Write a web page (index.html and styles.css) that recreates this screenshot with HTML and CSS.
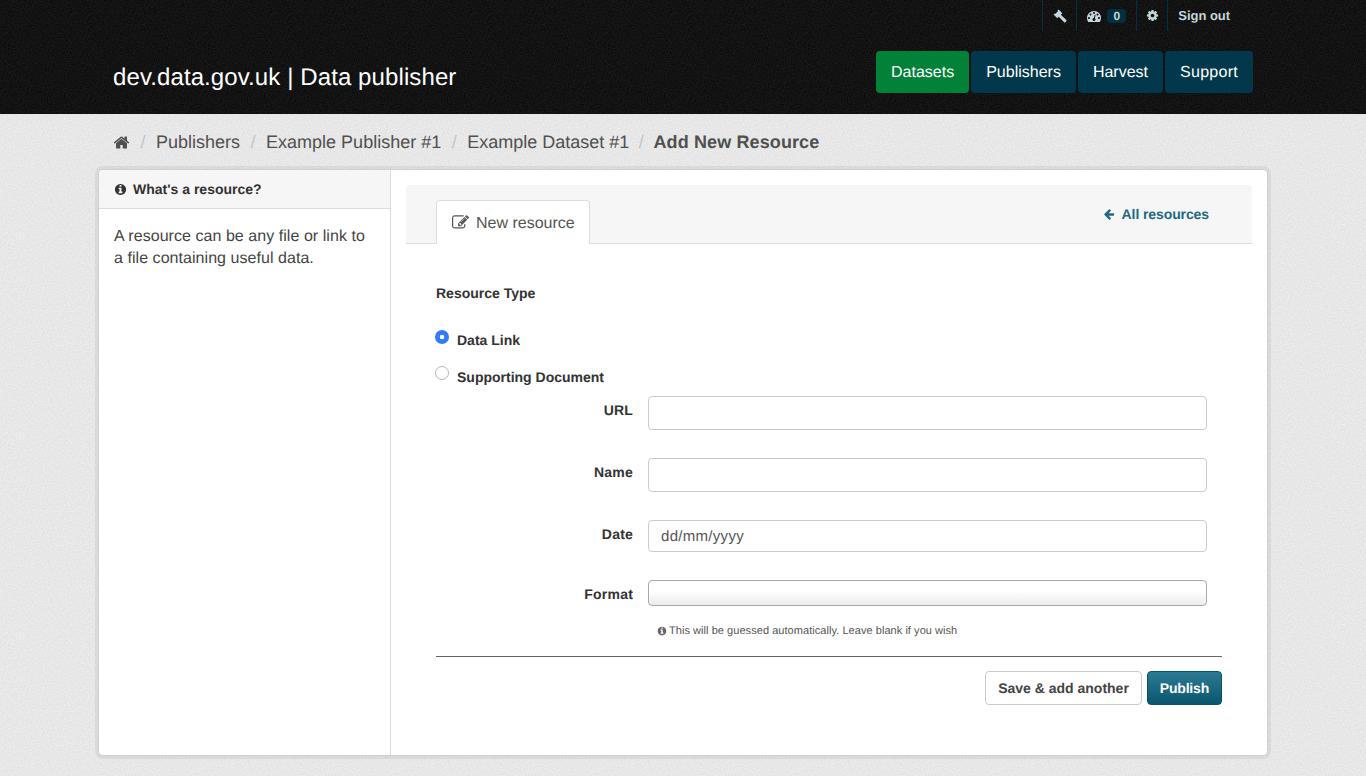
FILE: index.html
```html
<!DOCTYPE html>
<html lang="en">
<head>
<meta charset="utf-8">
<title>Add New Resource - dev.data.gov.uk</title>
<link rel="stylesheet" href="styles.css">
</head>
<body>
<header class="masthead">
  <div class="account-row">
    <ul class="account">
      <li class="account-item"><a href="#" class="account-link"><svg class="icon-gavel" viewBox="0 0 14 14"><path d="M5.600.6 9.300 4.300 7.900 5.700 13.300 11q.6.700 0 1.300l-.9.900q-.6.600-1.300 0L5.800 7.800 4.300 9.300.6 5.600l1-1 .6.500 2.800-2.800-.4-.7z"/></svg></a></li>
      <li class="account-item"><a href="#" class="account-link"><svg class="icon-dash" viewBox="0 0 1792 1792"><path d="M384 1152q0-53-37.500-90.500t-90.500-37.500-90.500 37.500-37.500 90.500 37.500 90.500 90.500 37.500 90.500-37.500 37.500-90.500zm192-448q0-53-37.500-90.500t-90.500-37.500-90.500 37.500-37.500 90.500 37.500 90.500 90.500 37.500 90.500-37.500 37.500-90.500zm428 481l101-382q6-26-7.500-48.500t-38.500-29.500-48 6.500-30 39.500l-101 382q-60 5-107 43.500t-63 98.500q-20 77 20 146t117 89 146-20 89-117q16-60-6-117t-72-91zm660-33q0-53-37.500-90.500t-90.500-37.500-90.500 37.500-37.500 90.500 37.500 90.500 90.500 37.500 90.500-37.500 37.500-90.500zm-640-640q0-53-37.500-90.500t-90.500-37.500-90.500 37.500-37.500 90.500 37.500 90.500 90.500 37.500 90.500-37.500 37.500-90.500zm448 192q0-53-37.500-90.500t-90.500-37.500-90.500 37.500-37.500 90.500 37.500 90.500 90.500 37.500 90.500-37.500 37.500-90.500zm320 448q0 261-141 483-19 29-54 29h-1402q-35 0-54-29-141-221-141-483 0-182 71-348t191-286 286-191 348-71 348 71 286 191 191 286 71 348z"/></svg><span class="badge">0</span></a></li>
      <li class="account-item"><a href="#" class="account-link"><svg class="icon-cog" viewBox="0 0 1792 1792"><path d="M1152 896q0-106-75-181t-181-75-181 75-75 181 75 181 181 75 181-75 75-181zm512-109v222q0 12-8 23t-20 13l-185 28q-19 54-39 91 35 50 107 138 10 12 10 25t-9 23q-27 37-99 108t-94 71q-12 0-26-9l-138-108q-44 23-91 38-16 136-29 186-7 28-36 28h-222q-14 0-24.500-8.500t-11.500-21.500l-28-184q-49-16-90-37l-141 107q-10 9-25 9-14 0-25-11-126-114-165-168-7-10-7-23 0-12 8-23 15-21 51-66.500t54-70.500q-27-50-41-99l-183-27q-13-2-21-12.500t-8-23.500v-222q0-12 8-23t19-13l186-28q14-46 39-92-40-57-107-138-10-12-10-24 0-10 9-23 26-36 98.500-107.500t94.500-71.500q13 0 26 10l138 107q44-23 91-38 16-136 29-186 7-28 36-28h222q14 0 24.500 8.500t11.500 21.500l28 184q49 16 90 37l142-107q9-9 24-9 13 0 25 10 129 119 165 170 7 8 7 22 0 12-8 23-15 21-51 66.500t-54 70.500q26 50 41 98l183 28q13 2 21 12.500t8 23.500z"/></svg></a></li>
      <li class="account-item account-item-last"><a href="#" class="account-link">Sign out</a></li>
    </ul>
  </div>
  <div class="brand-row">
    <a href="#" class="brand">dev.data.gov.uk | Data publisher</a>
    <nav class="nav">
      <a href="#" class="nav-link nav-link-active">Datasets</a>
      <a href="#" class="nav-link">Publishers</a>
      <a href="#" class="nav-link">Harvest</a>
      <a href="#" class="nav-link">Support</a>
    </nav>
  </div>
</header>

<div class="page">
  <ol class="crumbs">
    <li class="crumb"><a href="#" class="crumb-home"><svg class="icon-home" viewBox="0 0 1792 1792"><path d="M1472 992v480q0 26-19 45t-45 19h-384v-384h-256v384h-384q-26 0-45-19t-19-45v-480q0-1 .5-3t.5-3l575-474 575 474q1 2 1 6zm223-69l-62 74q-8 9-21 11h-3q-13 0-21-7l-692-577-692 577q-12 8-24 7-13-2-21-11l-62-74q-8-10-7-23.500t11-21.500l719-599q32-26 76-26t76 26l244 204v-195q0-14 9-23t23-9h192q14 0 23 9t9 23v408l219 182q10 8 11 21.500t-7 23.500z"/></svg></a></li>
    <li class="crumb"><span class="crumb-sep">/</span><a href="#">Publishers</a></li>
    <li class="crumb"><span class="crumb-sep">/</span><a href="#">Example Publisher #1</a></li>
    <li class="crumb"><span class="crumb-sep">/</span><a href="#">Example Dataset #1</a></li>
    <li class="crumb crumb-current"><span class="crumb-sep">/</span>Add New Resource</li>
  </ol>

  <div class="wrapper">
    <aside class="sidebar">
      <h2 class="side-heading"><svg class="icon-info" viewBox="0 0 1792 1792"><path d="M1152 1376v-160q0-14-9-23t-23-9h-96v-512q0-14-9-23t-23-9h-320q-14 0-23 9t-9 23v160q0 14 9 23t23 9h96v320h-96q-14 0-23 9t-9 23v160q0 14 9 23t23 9h448q14 0 23-9t9-23zm-128-896v-160q0-14-9-23t-23-9h-192q-14 0-23 9t-9 23v160q0 14 9 23t23 9h192q14 0 23-9t9-23zm640 416q0 209-103 385.500t-279.500 279.500-385.500 103-385.500-103-279.500-279.500-103-385.500 103-385.500 279.500-279.500 385.500-103 385.500 103 279.500 279.500 103 385.500z"/></svg>What's a resource?</h2>
      <p class="side-text">A resource can be any file or link to a file containing useful data.</p>
    </aside>

    <main class="main">
      <div class="tabbar">
        <a href="#" class="tab"><svg class="icon-edit" viewBox="0 0 1792 1792"><path d="M888 1184l116-116-152-152-116 116v56h96v96h56zm440-720q-16-16-33 1l-350 350q-17 17-1 33t33-1l350-350q17-17 1-33zm80 594v190q0 119-84.500 203.500t-203.500 84.500h-832q-119 0-203.500-84.500t-84.500-203.500v-832q0-119 84.500-203.500t203.500-84.500h832q63 0 117 25 15 7 18 23 3 17-9 29l-49 49q-14 14-32 8-23-6-45-6h-832q-66 0-113 47t-47 113v832q0 66 47 113t113 47h832q66 0 113-47t47-113v-126q0-13 9-22l64-64q15-15 35-7t20 29zm-96-738l288 288-672 672h-288v-288zm444 132l-92 92-288-288 92-92q28-28 68-28t68 28l152 152q28 28 28 68t-28 68z"/></svg>New resource</a>
        <a href="#" class="back-link"><svg class="icon-arrow" viewBox="0 0 1792 1792"><path d="M1664 896v128q0 53-32.500 90.500t-84.500 37.500h-704l293 294q38 36 38 90t-38 90l-75 76q-37 37-90 37-52 0-91-37l-651-652q-37-37-37-90 0-52 37-91l651-650q38-38 91-38 52 0 90 38l75 74q38 38 38 91t-38 91l-293 293h704q52 0 84.500 37.500t32.500 90.500z"/></svg>All resources</a>
      </div>

      <form class="form">
        <div class="type-heading">Resource Type</div>
        <label class="radio radio-first"><input class="radio-input" type="radio" name="kind" checked><span>Data Link</span></label>
        <label class="radio radio-second"><input class="radio-input" type="radio" name="kind"><span>Supporting Document</span></label>

        <div class="field field-url"><label class="field-label">URL</label><input class="control" type="text"></div>
        <div class="field field-name"><label class="field-label">Name</label><input class="control" type="text"></div>
        <div class="field field-date"><label class="field-label">Date</label><input class="control control-date" type="text" value="dd/mm/yyyy"></div>
        <div class="field field-format"><label class="field-label">Format</label><select class="control control-select"><option></option></select></div>
        <div class="hint"><svg class="icon-hint" viewBox="0 0 1792 1792"><path d="M1152 1376v-160q0-14-9-23t-23-9h-96v-512q0-14-9-23t-23-9h-320q-14 0-23 9t-9 23v160q0 14 9 23t23 9h96v320h-96q-14 0-23 9t-9 23v160q0 14 9 23t23 9h448q14 0 23-9t9-23zm-128-896v-160q0-14-9-23t-23-9h-192q-14 0-23 9t-9 23v160q0 14 9 23t23 9h192q14 0 23-9t9-23zm640 416q0 209-103 385.500t-279.500 279.500-385.500 103-385.500-103-279.500-279.500-103-385.500 103-385.500 279.500-279.500 385.500-103 385.500 103 279.500 279.500 103 385.500z"/></svg>This will be guessed automatically. Leave blank if you wish</div>
        <div class="actions">
          <button type="button" class="btn">Save &amp; add another</button>
          <button type="button" class="btn btn-primary">Publish</button>
        </div>
      </form>
    </main>
  </div>
</div>
</body>
</html>
```

FILE: styles.css
```css
* { box-sizing: border-box; }
html, body { margin: 0; padding: 0; }
body {
  height: 776px;
  overflow: hidden;
  background-color: #e3e3e3;
  background-image: url("data:image/svg+xml,%3Csvg xmlns='http://www.w3.org/2000/svg' width='200' height='200'%3E%3Cfilter id='n'%3E%3CfeTurbulence type='fractalNoise' baseFrequency='.7' numOctaves='2'/%3E%3CfeColorMatrix values='0 0 0 0 1 0 0 0 0 1 0 0 0 0 1 .9 0 0 0 -.3'/%3E%3C/filter%3E%3Crect width='200' height='200' filter='url(%23n)'/%3E%3C/svg%3E");
  font-family: "Liberation Sans", Arial, sans-serif;
  font-size: 14px;
  color: #444;
  text-rendering: geometricPrecision;
}
a { text-decoration: none; color: inherit; }
ul, ol { list-style: none; margin: 0; padding: 0; }

/* masthead */
.masthead {
  height: 114px;
  background-color: #0b0b0b;
  background-image: url("data:image/svg+xml,%3Csvg xmlns='http://www.w3.org/2000/svg' width='200' height='200'%3E%3Cfilter id='n'%3E%3CfeTurbulence type='fractalNoise' baseFrequency='.7' numOctaves='2'/%3E%3CfeColorMatrix values='0 0 0 0 1 0 0 0 0 1 0 0 0 0 1 .12 0 0 0 -.03'/%3E%3C/filter%3E%3Crect width='200' height='200' filter='url(%23n)'/%3E%3C/svg%3E");
  padding: 0 113px;
}
.account-row { display: flex; justify-content: flex-end; height: 51px; }
.account { display: flex; height: 31px; margin-right: 12px; }
.account-item {
  border-left: 1px solid #03303f;
  height: 31px;
}
.account-link {
  display: flex;
  align-items: center;
  height: 31px;
  padding: 0 10px;
  color: #c6d7db;
  font-size: 13px;
  font-weight: bold;
}
.account-item-last .account-link { padding-left: 10px; padding-right: 11px; letter-spacing: -.03px; }
.icon-gavel { width: 14px; height: 14px; fill: #c6d7db; margin: 0 -1px 0 0; }
.icon-dash { width: 14px; height: 14px; fill: #c6d7db; }
.icon-cog { width: 13px; height: 13px; fill: #c6d7db; margin: 0 -2px 0 -1px; }
.badge {
  display: block;
  margin-left: 6px;
  margin-right: 0;
  width: 19px;
  height: 14px;
  line-height: 15px;
  text-align: center;
  border-radius: 4px;
  background: #03303f;
  font-size: 12px;
  color: #c6d7db;
}
.brand-row { display: flex; justify-content: space-between; align-items: flex-start; }
.brand {
  color: #fff;
  font-size: 24px;
  line-height: 53px;
  letter-spacing: .1px;
}
.nav { display: flex; gap: 2px; }
.nav-link {
  display: block;
  height: 42px;
  line-height: 43px;
  padding: 0 15px;
  border-radius: 4px;
  background: #02384b;
  color: #fff;
  font-size: 16px;
}
.nav-link:last-child { letter-spacing: .28px; }
.nav-link-active { background: #028239; }

/* page */
.page { padding: 0 99px; }
.crumbs {
  display: flex;
  align-items: center;
  height: 56px;
  padding-left: 14px;
  font-size: 18px;
  color: #505050;
}
.crumb { display: flex; align-items: center; white-space: pre; }
.crumb-sep { color: #c4c4c4; padding: 0 10.500px; }
.crumb-home { display: flex; }
.icon-home { width: 17px; height: 17px; fill: #505050; }
.crumb-current { font-weight: bold; letter-spacing: .12px; }
.crumb-current .crumb-sep { padding: 0 9.500px; font-weight: normal; }

.wrapper {
  display: flex;
  height: 585px;
  background: #fff;
  border-radius: 4px;
  box-shadow: 0 0 0 1px #d0d0d0, 0 0 0 4px rgba(0, 0, 0, .06);
}
.sidebar {
  width: 292px;
  flex: none;
  border-right: 1px solid #ddd;
}
.side-heading {
  display: flex;
  align-items: center;
  height: 39px;
  margin: 0;
  padding: 0 15px;
  background: #f6f6f6;
  border-bottom: 1px solid #ddd;
  border-radius: 4px 0 0 0;
  font-size: 14px;
  font-weight: bold;
  color: #333;
}
.icon-info { width: 13px; height: 13px; fill: #333; margin-right: 6px; }
.side-text {
  margin: 17px 15px;
  font-size: 16px;
  line-height: 22px;
  letter-spacing: .05px;
  color: #444;
}

.main { flex: 1; padding: 15px 15px 0 15px; }
.tabbar {
  display: flex;
  justify-content: space-between;
  align-items: flex-start;
  height: 59px;
  background: #f6f6f6;
  border-bottom: 1px solid #ddd;
  border-radius: 4px 4px 0 0;
  padding: 15px 43px 0 30px;
}
.tab {
  display: flex;
  align-items: center;
  height: 44px;
  padding: 2px 14px 0 15px;
  background: #fff;
  border: 1px solid #ddd;
  border-bottom: 0;
  border-radius: 4px 4px 0 0;
  font-size: 16px;
  color: #555;
}
.icon-edit { width: 17px; height: 17px; fill: #555; margin: -2px 7px 0 0; }
.back-link {
  display: flex;
  align-items: center;
  height: 28px;
  font-size: 14px;
  font-weight: bold;
  letter-spacing: -.1px;
  color: #1f6a84;
}
.icon-arrow { width: 12px; height: 12px; fill: #1f6a84; margin-right: 7px; }

.form { padding: 0 30px; }
.type-heading {
  padding-top: 40px;
  line-height: 18px;
  font-size: 14px;
  font-weight: bold;
  color: #333;
}
.radio {
  display: flex;
  align-items: flex-start;
  font-size: 14px;
  font-weight: bold;
  color: #333;
  line-height: 18px;
}
.radio-first { margin-top: 28px; }
.radio-second { margin-top: 17px; }
.radio span { margin-top: 1px; }
.radio-second span { margin-top: 2px; }
.radio-input {
  appearance: none;
  width: 14px;
  height: 14px;
  margin: 0 8px 0 -1px;
  border: 1px solid #b5b5b5;
  border-radius: 50%;
  background: #fff;
}
.radio-input:checked {
  border: 0;
  background: radial-gradient(circle, #fff 0, #fff 2px, #2f7cf6 2.6px);
}
.field { display: flex; align-items: flex-start; }
.field-url { margin-top: 10px; }
.field-name, .field-date { margin-top: 28px; }
.field-format { margin-top: 28px; }
.field-label {
  width: 197px;
  flex: none;
  text-align: right;
  font-size: 14px;
  font-weight: bold;
  letter-spacing: .2px;
  color: #333;
  line-height: 18px;
  margin-top: 5px;
}
.control {
  display: block;
  width: 559px;
  height: 34px;
  margin-left: 15px;
  padding: 0 13px;
  background: #fff;
  border: 1px solid #ccc;
  border-radius: 4px;
  font-family: inherit;
  font-size: 14px;
  color: #555;
  outline: 0;
  text-rendering: geometricPrecision;
}
.control-date { height: 32px; padding-left: 12px; font-size: 15px; letter-spacing: .3px; }
.control-select {
  appearance: none;
  height: 26px;
  border-color: #a8a8a8;
  background: linear-gradient(#fff 40%, #ececec);
}
.hint {
  display: flex;
  align-items: center;
  margin: 18px 0 0 221px;
  height: 14px;
  font-size: 11px;
  letter-spacing: .05px;
  color: #555;
}
.icon-hint { width: 10px; height: 10px; fill: #666; margin-right: 2px; }
.actions {
  display: flex;
  justify-content: flex-end;
  gap: 5px;
  margin-top: 18px;
  padding-top: 14px;
  border-top: 1px solid #666;
}
.btn {
  height: 34px;
  padding: 0 12px;
  background: #fff;
  border: 1px solid #ccc;
  border-radius: 4px;
  font-family: inherit;
  font-size: 14px;
  font-weight: bold;
  color: #444;
  text-rendering: geometricPrecision;
}
.btn-primary {
  color: #fff;
  border-color: #0a5068;
  background: linear-gradient(#2b7a93, #0b566f);
  letter-spacing: -.2px;
}
```
